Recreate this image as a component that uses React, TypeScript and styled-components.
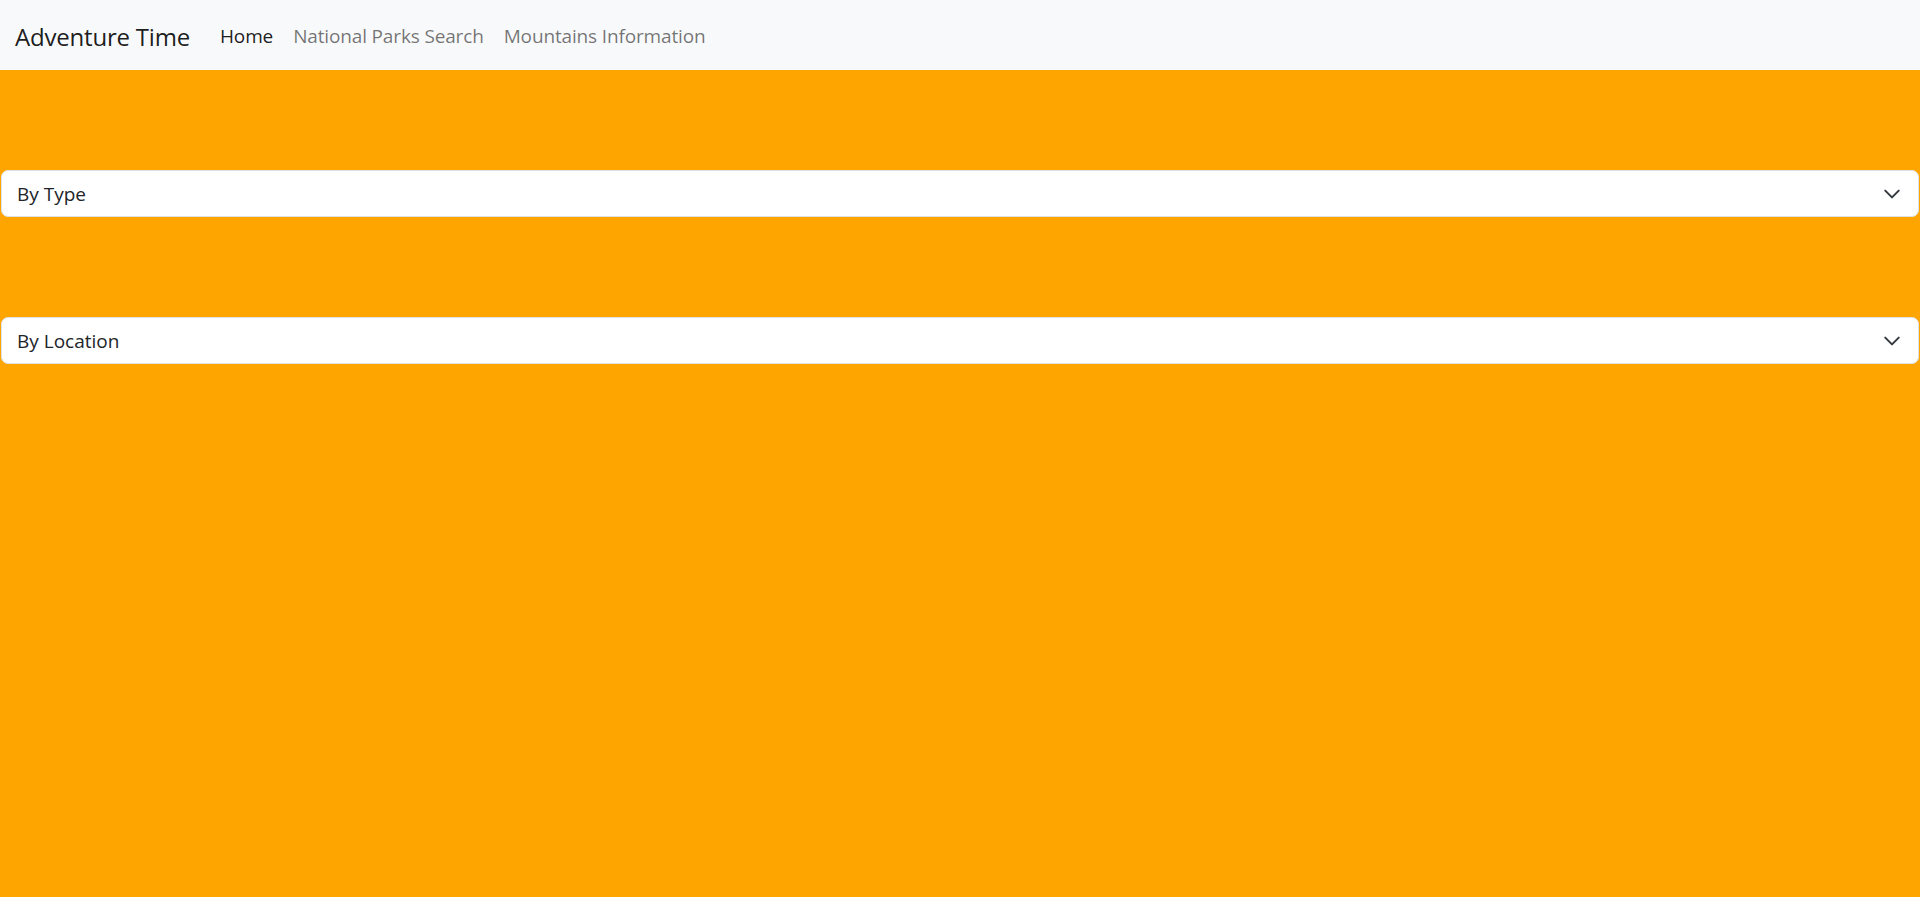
import React from "react";
import styled, { createGlobalStyle } from "styled-components";

const Global = createGlobalStyle`
  html, body { margin: 0; padding: 0; }
  body {
    background: #ffa500;
    font-family: "Open Sans", "Noto Sans", "Liberation Sans", sans-serif;
    color: #212529;
    min-height: 897px;
  }
`;

const Page = styled.div`
  min-height: 897px;
  background: #ffa500;
`;

const NavBar = styled.nav`
  height: 70px;
  box-sizing: border-box;
  background: #f8f9fa;
  display: flex;
  align-items: center;
  padding: 2px 15px 0 15px;
`;

const Brand = styled.a`
  font-size: 24px;
  color: rgba(0, 0, 0, 0.9);
  margin-right: 20px;
  text-decoration: none;
  letter-spacing: -0.2px;
`;

const NavList = styled.div`
  display: flex;
  align-items: center;
`;

const NavLink = styled.a<{ $active?: boolean }>`
  font-size: 19px;
  padding: 10px 10px;
  color: ${(p) => (p.$active ? "rgba(0,0,0,0.9)" : "rgba(0,0,0,0.55)")};
  text-decoration: none;
  letter-spacing: -0.15px;
`;

const Content = styled.main`
  display: flex;
  flex-direction: column;
  gap: 100px;
  padding: 100px 1px 0 1px;
`;

const SelectBox = styled.div`
  height: 47px;
  box-sizing: border-box;
  background: #fff;
  border: 1px solid #dee2e6;
  border-radius: 7px;
  display: flex;
  align-items: center;
  justify-content: space-between;
  padding: 1px 17px 0 15px;
  font-size: 19px;
  color: #212529;
`;

const Chevron = () => (
  <svg width="18" height="18" viewBox="0 0 16 16" fill="none">
    <path d="m2 5 6 6 6-6" stroke="#343a40" strokeWidth="1.8" strokeLinecap="round" strokeLinejoin="round" />
  </svg>
);

export default function App() {
  return (
    <Page>
      <Global />
      <NavBar>
        <Brand href="#">Adventure Time</Brand>
        <NavList>
          <NavLink $active href="#">Home</NavLink>
          <NavLink href="#">National Parks Search</NavLink>
          <NavLink href="#">Mountains Information</NavLink>
        </NavList>
      </NavBar>
      <Content>
        <SelectBox>
          <span>By Type</span>
          <Chevron />
        </SelectBox>
        <SelectBox>
          <span>By Location</span>
          <Chevron />
        </SelectBox>
      </Content>
    </Page>
  );
}
